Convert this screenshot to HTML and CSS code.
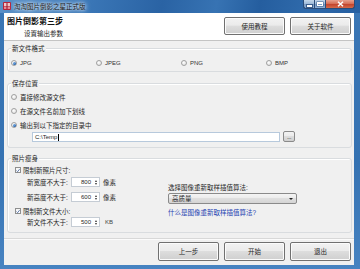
FILE: index.html
```html
<!DOCTYPE html>
<html lang="zh">
<head>
<meta charset="utf-8">
<title>淘淘图片倒影之星正式版</title>
<link rel="stylesheet" href="styles.css">
</head>
<body>
<div class="window">
  <div class="titlebar">
    <svg class="appicon" width="8" height="8" viewBox="0 0 8 8">
      <rect x="0" y="0" width="8" height="8" rx="1" fill="#b8233a"/>
      <rect x="1" y="1" width="6" height="3" fill="#f3c6c9"/>
      <rect x="1" y="4.5" width="6" height="2.5" fill="#e58a95"/>
      <rect x="3.5" y="1" width="1" height="6" fill="#8e1528"/>
    </svg>
    <span class="wtitle">淘淘图片倒影之星正式版</span>
    <div class="wctrls">
      <span class="wbtn min"><span class="min-glyph"></span></span>
      <span class="wbtn max"><span class="max-glyph"></span></span>
      <span class="wbtn close">
        <svg width="7" height="6" viewBox="0 0 7 6"><path d="M1 0.8 L6 5.2 M6 0.8 L1 5.2" stroke="#fff" stroke-width="1.5"/></svg>
      </span>
    </div>
  </div>

  <div class="client">
    <div class="header">
      <div class="htext">
        <div class="htitle">图片倒影第三步</div>
        <div class="hsub">设置输出参数</div>
      </div>
      <div class="hbtns">
        <span class="btn">使用教程</span>
        <span class="btn">关于软件</span>
      </div>
    </div>

    <div class="body">
      <div class="group g1">
        <span class="gtitle">新文件格式</span>
        <div class="formats">
          <span class="opt"><span class="radio on"></span>JPG</span>
          <span class="opt"><span class="radio"></span>JPEG</span>
          <span class="opt"><span class="radio"></span>PNG</span>
          <span class="opt"><span class="radio"></span>BMP</span>
        </div>
      </div>

      <div class="group g2">
        <span class="gtitle">保存位置</span>
        <div class="opts">
          <span class="opt row14"><span class="radio"></span>直接修改源文件</span>
          <span class="opt row14"><span class="radio"></span>在源文件名前加下划线</span>
          <span class="opt row14"><span class="radio on"></span>输出到以下指定的目录中</span>
        </div>
        <div class="pathrow">
          <span class="pathbox">C:\Temp<span class="caret"></span></span>
          <span class="dots">...</span>
        </div>
      </div>

      <div class="group g3">
        <span class="gtitle">照片瘦身</span>
        <div class="slim">
          <div class="slim-left">
            <span class="opt cbrow r1"><span class="check"><svg width="5" height="5" viewBox="0 0 5 5"><path d="M0.6 2.6 L2 4 L4.5 0.8" fill="none" stroke="#3d5f9a" stroke-width="1"/></svg></span>限制新照片尺寸:</span>
            <div class="field r2"><span class="flabel">新宽度不大于:</span><span class="spin">800<span class="arrows"><i class="up"></i><i class="down"></i></span></span><span class="unit">像素</span></div>
            <div class="field r3"><span class="flabel">新高度不大于:</span><span class="spin">600<span class="arrows"><i class="up"></i><i class="down"></i></span></span><span class="unit">像素</span></div>
            <span class="opt cbrow r4"><span class="check"><svg width="5" height="5" viewBox="0 0 5 5"><path d="M0.6 2.6 L2 4 L4.5 0.8" fill="none" stroke="#3d5f9a" stroke-width="1"/></svg></span>限制新文件大小:</span>
            <div class="field r5"><span class="flabel">新文件不大于:</span><span class="spin">500<span class="arrows"><i class="up"></i><i class="down"></i></span></span><span class="unit kb">KB</span></div>
          </div>
          <div class="slim-right">
            <div class="algolabel">选择图像重新取样插值算法:</div>
            <div class="select"><span>高质量</span><i class="sel-arrow"></i></div>
            <div class="link">什么是图像重新取样插值算法?</div>
          </div>
        </div>
      </div>
    </div>

    <div class="footer">
      <span class="btn fbtn">上一步</span>
      <span class="btn fbtn">开始</span>
      <span class="btn fbtn">退出</span>
    </div>
  </div>
</div>
</body>
</html>
```

FILE: styles.css
```css
* { box-sizing: border-box; margin: 0; padding: 0; }
html, body { width: 360px; height: 269px; overflow: hidden; }
body {
  font-family: "Liberation Sans", "Noto Sans CJK SC", sans-serif;
  font-size: 6.5px;
  color: #262626;
  background: #fff;
}

.window {
  width: 360px;
  height: 269px;
  display: flex;
  flex-direction: column;
  background: linear-gradient(180deg, #3a76b5 0%, #3572b2 60%, #4783c1 100%);
}

/* title bar */
.titlebar {
  height: 13px;
  flex: none;
  display: flex;
  align-items: flex-start;
  background: linear-gradient(100deg, #5a90c7 0%, #3a76b6 25%, #2a63a4 45%, #3773b3 60%, #255e9f 72%, #2f6aab 85%, #265fa1 100%);
}
.appicon { margin: 2px 0 0 3px; flex: none; }
.wtitle {
  margin: 2px 0 0 3px;
  line-height: 9px;
  color: #111;
  text-shadow: 0 0 2px #dfeefc, 0 0 4px #dfeefc, 0 0 6px #cfe3f7;
}
.wctrls { margin-left: auto; margin-right: 5px; display: flex; }
.wbtn {
  height: 9px;
  display: flex;
  align-items: center;
  justify-content: center;
  border: 1px solid #2b4c78;
  border-top: none;
}
.wbtn.min {
  width: 11px;
  border-radius: 0 0 0 3px;
  border-right: none;
  background: linear-gradient(#c3d6ea 0%, #9fbbd9 45%, #7597c0 50%, #8eb0d6 100%);
}
.wbtn.max {
  width: 12px;
  background: linear-gradient(#c3d6ea 0%, #9fbbd9 45%, #7597c0 50%, #8eb0d6 100%);
}
.wbtn.close {
  width: 29px;
  border-left: none;
  border-radius: 0 0 3px 0;
  background: linear-gradient(#e8a18f 0%, #d77058 45%, #c2412a 50%, #d46a4a 100%);
}
.min-glyph { width: 5px; height: 2px; background: #fff; margin-top: 3px; box-shadow: 0 0 0 1px #3b5e8c; }
.max-glyph { width: 6px; height: 4px; border: 1px solid #fff; border-top-width: 2px; box-shadow: 0 0 0 0.5px #3b5e8c; }

/* client */
.client {
  flex: none;
  height: 252px;
  margin: 0 6px 0 4px;
  background: #f0f0f0;
  display: flex;
  flex-direction: column;
}

.header {
  height: 28px;
  flex: none;
  background: #fff;
  border-bottom: 1px solid #c4c4c4;
  display: flex;
  justify-content: space-between;
  padding: 4px 3px 0 3px;
}
.htitle { font-size: 8px; font-weight: bold; line-height: 10px; color: #111; }
.hsub { line-height: 9px; margin: 2px 0 0 17px; }
.hbtns { display: flex; gap: 5px; }

.btn {
  width: 61px;
  height: 18px;
  border: 1px solid #707070;
  border-radius: 2px;
  background: linear-gradient(#f2f2f2 0%, #ebebeb 45%, #dddddd 50%, #cfcfcf 100%);
  box-shadow: inset 0 0 0 1px #fbfbfb;
  display: flex;
  align-items: center;
  justify-content: center;
  line-height: 9px;
}

.body { padding: 0 2px 0 3px; }

.group {
  border: 1px solid #d9dcdf;
  border-radius: 3px;
  box-shadow: inset 1px 1px 0 #fff;
}
.gtitle {
  display: block;
  width: fit-content;
  height: 9px;
  line-height: 9px;
  margin: -5px 0 0 3px;
  padding: 0 1px;
  background: #f0f0f0;
}

.g1 { margin-top: 7px; padding-bottom: 3px; }
.formats {
  margin-top: 5px;
  padding-left: 3px;
  display: grid;
  grid-template-columns: 85px 85px 85px 85px;
  height: 10px;
}
.opt { display: flex; align-items: center; gap: 3px; height: 10px; }
.formats .opt { font-size: 6px; color: #333; }

.radio {
  width: 6px;
  height: 6px;
  border-radius: 50%;
  border: 1px solid #a0a0a0;
  background: radial-gradient(circle at 40% 35%, #ffffff 0%, #e9e9e9 60%, #d6d6d6 100%);
  display: flex;
  align-items: center;
  justify-content: center;
  flex: none;
}
.radio.on::after {
  content: "";
  width: 3px;
  height: 3px;
  border-radius: 50%;
  background: radial-gradient(circle at 35% 35%, #7fb4ea 0%, #2e6bb4 60%, #1b4c8c 100%);
}

.g2 { margin-top: 11px; padding-bottom: 5px; }
.opts { margin-top: 2px; padding-left: 3px; display: flex; flex-direction: column; }
.row14 { height: 14px; }
.pathrow {
  display: flex;
  align-items: flex-end;
  height: 11px;
  margin-top: -1px;
  padding-left: 24px;
}
.pathbox {
  width: 248px;
  height: 10px;
  border: 1px solid #b7c9dc;
  background: #fff;
  padding-left: 2px;
  line-height: 8px;
  font-size: 6px;
  display: flex;
  align-items: center;
}
.caret { width: 1px; height: 7px; background: #000; margin-left: 1px; }
.dots {
  width: 12px;
  height: 11px;
  margin-left: 3px;
  border: 1px solid #8a8a8a;
  border-radius: 2px;
  background: linear-gradient(#f2f2f2 0%, #ebebeb 45%, #dddddd 50%, #cfcfcf 100%);
  display: flex;
  align-items: center;
  justify-content: center;
  line-height: 6px;
  color: #555;
  letter-spacing: -0.5px;
}

.g3 { margin-top: 10px; padding-bottom: 5px; }
.slim { display: flex; }
.slim-left { width: 160px; display: flex; flex-direction: column; }
.cbrow { padding-left: 7px; gap: 2px; }
.check {
  width: 6px;
  height: 6px;
  border: 1px solid #8e8f8f;
  background: linear-gradient(#f4f4f4, #ffffff);
  display: flex;
  align-items: center;
  justify-content: center;
  flex: none;
}
.r1 { margin-top: 2px; }
.r2 { margin-top: 2px; }
.r3 { margin-top: 5px; }
.r4 { margin-top: 4px; }
.r5 { margin-top: 1px; }

.field { display: flex; align-items: center; height: 10px; padding-left: 19px; }
.flabel { width: 44px; }
.spin {
  width: 29px;
  height: 10px;
  border: 1px solid #c5ccd4;
  background: #fff;
  display: flex;
  align-items: center;
  justify-content: flex-end;
  padding-right: 1px;
  line-height: 8px;
  font-size: 6px;
}
.arrows {
  width: 5px;
  margin-left: 2px;
  display: flex;
  flex-direction: column;
  align-items: center;
  gap: 1px;
}
.arrows i { width: 0; height: 0; border-left: 1.5px solid transparent; border-right: 1.5px solid transparent; }
.arrows .up { border-bottom: 2px solid #333; }
.arrows .down { border-top: 2px solid #333; }
.unit { margin-left: 3px; }
.unit.kb { margin-left: 5px; color: #444; font-size: 6px; }

.slim-right { padding-top: 20px; }
.algolabel { line-height: 10px; }
.select {
  width: 129px;
  height: 11px;
  border: 1px solid #8a8a8a;
  border-radius: 2px;
  background: linear-gradient(#f4f4f4 0%, #ececec 45%, #dfdfdf 50%, #d4d4d4 100%);
  display: flex;
  align-items: center;
  padding-left: 3px;
  line-height: 8px;
}
.sel-arrow {
  margin-left: auto;
  margin-right: 3px;
  width: 0;
  height: 0;
  border-left: 2px solid transparent;
  border-right: 2px solid transparent;
  border-top: 2px solid #222;
}
.link { margin-top: 4px; line-height: 10px; color: #2341b0; }

.footer {
  margin-top: auto;
  height: 27px;
  flex: none;
  border-top: 1px solid #d8d8d8;
  box-shadow: inset 0 1px 0 #fbfbfb;
  display: flex;
  justify-content: flex-end;
  gap: 5px;
  padding: 3px 3px 0 0;
}
.fbtn { height: 19px; }
```
